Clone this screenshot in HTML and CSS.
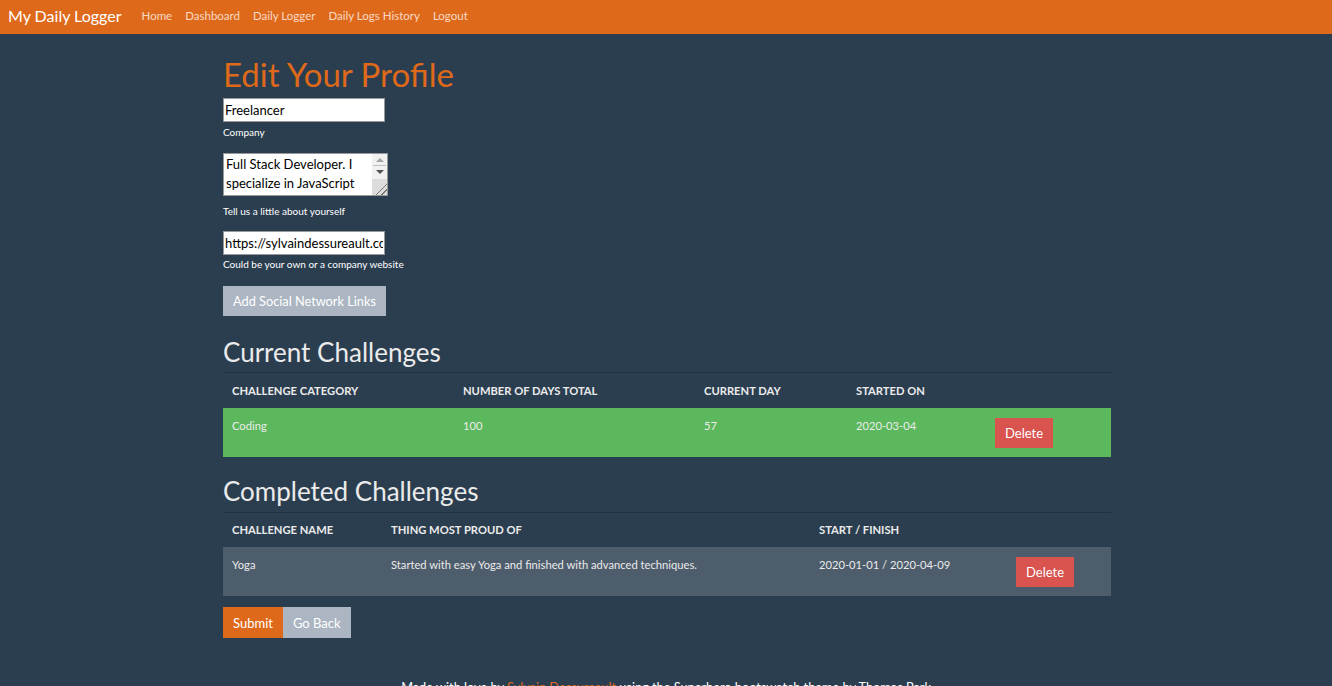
FILE: index.html
```html
<!DOCTYPE html>
<html lang="en">
<head>
<meta charset="utf-8">
<title>My Daily Logger</title>
<link rel="stylesheet" href="styles.css">
</head>
<body>
<nav class="navbar">
  <a class="brand" href="#">My Daily Logger</a>
  <ul class="nav-links">
    <li><a href="#">Home</a></li>
    <li><a href="#">Dashboard</a></li>
    <li><a href="#">Daily Logger</a></li>
    <li><a href="#">Daily Logs History</a></li>
    <li><a href="#">Logout</a></li>
  </ul>
</nav>
<main class="container">
  <h1 class="page-title">Edit Your Profile</h1>
  <form class="profile-form">
    <div class="field">
      <input class="text-input" type="text" value="Freelancer">
      <small class="help">Company</small>
    </div>
    <div class="field field-area">
      <div class="ta-wrap">
        <textarea class="text-area" rows="2">Full Stack Developer. I specialize in JavaScript and love building web applications with React and Node.js.</textarea>
        <div class="ta-bar" aria-hidden="true">
          <span class="ta-btn"><span class="arrow-up"></span></span>
          <span class="ta-thumb"></span>
          <span class="ta-btn"><span class="arrow-down"></span></span>
          <span class="ta-grip"></span>
        </div>
      </div>
      <small class="help">Tell us a little about yourself</small>
    </div>
    <div class="field field-url">
      <input class="text-input" type="text" value="https://sylvaindessureault.com">
      <small class="help">Could be your own or a company website</small>
    </div>
    <button type="button" class="btn btn-light btn-social">Add Social Network Links</button>

    <h2 class="section-title">Current Challenges</h2>
    <table class="table table-current">
      <thead>
        <tr>
          <th class="c1">Challenge Category</th>
          <th class="c2">Number of Days Total</th>
          <th class="c3">Current Day</th>
          <th class="c4">Started On</th>
          <th class="c5"></th>
        </tr>
      </thead>
      <tbody>
        <tr class="row-success">
          <td>Coding</td>
          <td>100</td>
          <td>57</td>
          <td>2020-03-04</td>
          <td><button type="button" class="btn btn-danger">Delete</button></td>
        </tr>
      </tbody>
    </table>

    <h2 class="section-title section-title-2">Completed Challenges</h2>
    <table class="table table-completed">
      <thead>
        <tr>
          <th class="d1">Challenge Name</th>
          <th class="d2">Thing Most Proud Of</th>
          <th class="d3">Start / Finish</th>
          <th class="d4"></th>
        </tr>
      </thead>
      <tbody>
        <tr class="row-muted">
          <td>Yoga</td>
          <td>Started with easy Yoga and finished with advanced techniques.</td>
          <td>2020-01-01 / 2020-04-09</td>
          <td><button type="button" class="btn btn-danger">Delete</button></td>
        </tr>
      </tbody>
    </table>

    <div class="actions">
      <button type="submit" class="btn btn-primary">Submit</button>
      <button type="button" class="btn btn-light">Go Back</button>
    </div>
  </form>
</main>
<footer class="footer">
  Made with love by <a href="#">Sylvain Dessureault</a> using the Superhero bootswatch theme by Thomas Park
</footer>
</body>
</html>
```
FILE: styles.css
```css
* { box-sizing: border-box; }
html, body { margin: 0; padding: 0; }
body {
  background: #2b3e50;
  color: #ebebeb;
  font-family: Lato, "Liberation Sans", sans-serif;
  font-size: 12px;
}
a { text-decoration: none; }

.navbar {
  display: flex;
  align-items: center;
  height: 34px;
  background: #df691a;
  padding: 0 8px 4px;
}
.brand {
  color: #fff;
  font-size: 16px;
  margin-right: 20px;
}
.nav-links {
  display: flex;
  list-style: none;
  margin: 0;
  padding: 0;
  gap: 13px;
}
.nav-links a {
  color: rgba(255,255,255,0.75);
  font-size: 11.5px;
}

.container {
  width: 890px;
  margin: 0 auto;
  padding: 20px 0 0 2px;
}
.page-title {
  color: #df691a;
  font-weight: 400;
  font-size: 33px;
  line-height: 40px;
  margin: 0 0 4px;
}
.field { display: flex; flex-direction: column; align-items: flex-start; }
.text-input {
  width: 162px;
  height: 24px;
  border: 1px solid #999;
  font-family: Lato, "Liberation Sans", sans-serif;
  font-size: 13px;
  padding: 1px 1px;
  color: #000;
  background: #fff;
}
.help {
  font-size: 10px;
  color: #fff;
  margin-top: 4px;
}
.field-area { margin-top: 15px; }
.ta-wrap {
  display: flex;
  width: 165px;
  height: 43px;
  border: 1px solid #999;
  background: #fff;
}
.text-area {
  flex: 1;
  min-width: 0;
  height: 100%;
  font-family: Lato, "Liberation Sans", sans-serif;
  font-size: 13px;
  line-height: 19px;
  padding: 1px 2px;
  border: 0;
  color: #000;
  resize: none;
  overflow: hidden;
  outline: none;
}
.ta-bar {
  width: 15px;
  display: flex;
  flex-direction: column;
  background: #f1f1f1;
}
.ta-btn {
  height: 11px;
  display: flex;
  align-items: center;
  justify-content: center;
}
.arrow-up {
  width: 0; height: 0;
  border-left: 4px solid transparent;
  border-right: 4px solid transparent;
  border-bottom: 4px solid #a3a3a3;
}
.arrow-down {
  width: 0; height: 0;
  border-left: 4px solid transparent;
  border-right: 4px solid transparent;
  border-top: 4px solid #505050;
}
.ta-thumb {
  height: 1px;
  margin: 0 1px;
  background: #c1c1c1;
}
.ta-grip {
  flex: 1;
  margin-top: 2px;
  background:
    linear-gradient(135deg, transparent 62%, #777 62%, #777 66%, transparent 66%, transparent 80%, #777 80%, #777 84%, transparent 84%),
    #dcdcdc;
}
.field-area .help { margin-top: 9px; }
.field-url { margin-top: 14px; }
.field-url .help { margin-top: 3px; }

.btn {
  border: 0;
  border-radius: 0;
  color: #fff;
  font-family: Lato, "Liberation Sans", sans-serif;
  font-size: 13px;
  cursor: pointer;
}
.btn-light { background: #abb6c2; }
.btn-primary { background: #df691a; }
.btn-danger { background: #d9534f; height: 30px; padding: 0 10px; }
.btn-social {
  margin-top: 16px;
  height: 30px;
  padding: 0 10px;
  font-size: 12.75px;
}

.section-title {
  font-weight: 400;
  font-size: 26px;
  line-height: 32px;
  margin: 20px 0 4px;
  color: #ebebeb;
}
.section-title-2 { margin-top: 18px; margin-bottom: 5px; }
.table {
  width: 100%;
  border-collapse: collapse;
  table-layout: fixed;
  font-size: 11.2px;
}
.table th {
  text-align: left;
  text-transform: uppercase;
  font-weight: 700;
  height: 35px;
  padding: 0 9px;
  border-top: 1px solid #22313f;
  color: #ebebeb;
}
.table td {
  vertical-align: top;
  padding: 11px 9px 0;
  height: 49px;
  color: #ebebeb;
}
.table td .btn-danger { margin-top: -1px; }
.row-success { background: #5cb85c; }
.row-muted { background: #4e5d6c; }

.c1 { width: 231px; }
.c2 { width: 241px; }
.c3 { width: 152px; }
.c4 { width: 139px; }
.c5 { width: 125px; }
.d1 { width: 159px; }
.d2 { width: 428px; }
.d3 { width: 197px; }
.d4 { width: 104px; }

.actions {
  display: flex;
  margin-top: 11px;
}
.actions .btn { height: 31px; padding: 0 10px; }

.footer {
  text-align: center;
  margin-top: 41px;
  font-size: 12.75px;
  color: #fff;
  padding-bottom: 20px;
}
.footer a { color: #df691a; }
```
